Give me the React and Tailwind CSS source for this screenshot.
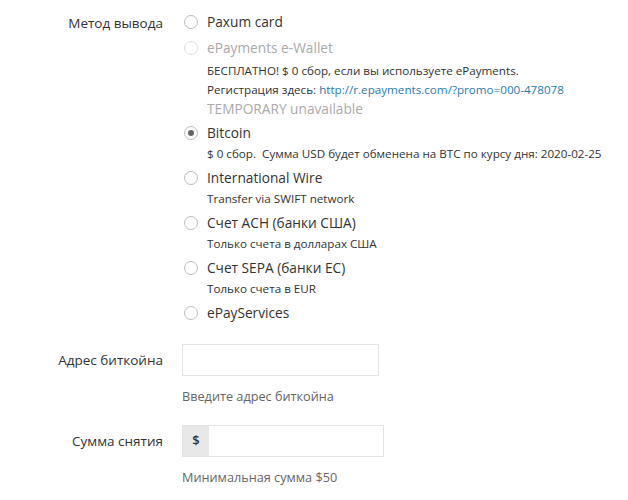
import React, { useState } from 'react';

const options = [
  { id: 'paxum', label: 'Paxum card' },
  {
    id: 'epayments',
    label: 'ePayments e-Wallet',
    disabled: true,
    desc: (
      <div className="mt-[2px]">
        <div className="text-[11.65px] leading-[19px]">БЕСПЛАТНО! $ 0 сбор, если вы используете ePayments.</div>
        <div className="text-[11.65px] leading-[19px]">
          Регистрация здесь: <span className="text-[#2a7ab0]">http://r.epayments.com/?promo=000-478078</span>
        </div>
        <div className="text-[13.7px] leading-[19px] text-[#aaaaaa]">TEMPORARY unavailable</div>
      </div>
    ),
  },
  {
    id: 'bitcoin',
    label: 'Bitcoin',
    desc: (
      <div className="text-[11.65px] leading-[19px] whitespace-pre">
        {'$ 0 сбор.  Сумма USD будет обменена на BTC по курсу дня: 2020-02-25'}
      </div>
    ),
  },
  {
    id: 'wire',
    label: 'International Wire',
    desc: <div className="text-[11.65px] leading-[19px]">Transfer via SWIFT network</div>,
  },
  {
    id: 'ach',
    label: 'Счет ACH (банки США)',
    desc: <div className="text-[11.65px] leading-[19px]">Только счета в долларах США</div>,
  },
  {
    id: 'sepa',
    label: 'Счет SEPA (банки ЕС)',
    desc: <div className="text-[11.65px] leading-[19px]">Только счета в EUR</div>,
  },
  { id: 'epayservices', label: 'ePayServices' },
];

function Radio({ checked, disabled }) {
  return (
    <span
      className={
        'w-[14px] h-[14px] rounded-full border flex items-center justify-center bg-white ' +
        (disabled ? 'border-[#dddddd]' : 'border-[#bdbdbd]')
      }
    >
      {checked && <span className="w-[6px] h-[6px] rounded-full bg-[#666666]" />}
    </span>
  );
}

export default function App() {
  const [method, setMethod] = useState('bitcoin');

  return (
    <div className="w-[628px] h-[500px] bg-white text-[#333333] font-['Open_Sans',sans-serif] pt-[9px]">
      {/* Метод вывода */}
      <div className="flex">
        <div className="w-[163px] text-right text-[13.5px] leading-[22px] pt-[3px]">Метод вывода</div>
        <div className="ml-[21px] flex flex-col">
          {options.map((o) => (
            <div key={o.id} className="py-[2px] cursor-pointer" onClick={() => !o.disabled && setMethod(o.id)}>
              <div className="flex items-center h-[22px]">
                <Radio checked={method === o.id} disabled={o.disabled} />
                <span className={'ml-[9px] text-[13.7px] ' + (o.disabled ? 'text-[#aaaaaa]' : 'text-[#333333]')}>
                  {o.label}
                </span>
              </div>
              {o.desc && <div className="ml-[23px]">{o.desc}</div>}
            </div>
          ))}
        </div>
      </div>

      {/* Адрес биткойна */}
      <div className="flex mt-[18px]">
        <div className="w-[163px] text-right text-[13.5px] leading-[32px]">Адрес биткойна</div>
        <div className="ml-[19px]">
          <input
            type="text"
            className="w-[197px] h-[32px] border border-[#e3e3e3] outline-none px-2 text-[13px]"
          />
          <div className="mt-[10px] text-[12.7px] leading-[20px] text-[#666666]">Введите адрес биткойна</div>
        </div>
      </div>

      {/* Сумма снятия */}
      <div className="flex mt-[19px]">
        <div className="w-[163px] text-right text-[13.5px] leading-[32px]">Сумма снятия</div>
        <div className="ml-[19px]">
          <div className="flex w-[202px] h-[32px] border border-[#e3e3e3]">
            <span className="w-[26px] bg-[#e8e8e8] flex items-center justify-center text-[13px] font-semibold">$</span>
            <input type="text" className="flex-1 min-w-0 outline-none px-2 text-[13px]" />
          </div>
          <div className="mt-[10px] text-[12.7px] leading-[20px] text-[#666666]">Минимальная сумма $50</div>
        </div>
      </div>
    </div>
  );
}
